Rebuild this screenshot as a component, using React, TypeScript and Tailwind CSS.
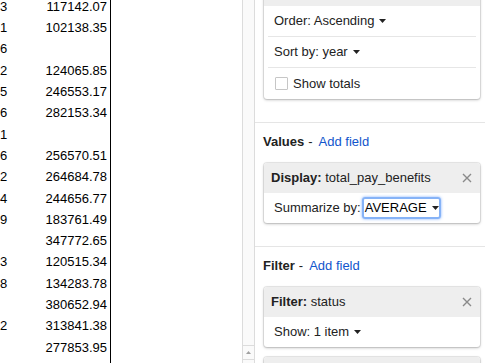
import React from "react";

const rows: [string, string][] = [
  ["3", "117142.07"],
  ["1", "102138.35"],
  ["6", ""],
  ["2", "124065.85"],
  ["5", "246553.17"],
  ["6", "282153.34"],
  ["1", ""],
  ["6", "256570.51"],
  ["2", "264684.78"],
  ["4", "244656.77"],
  ["9", "183761.49"],
  ["", "347772.65"],
  ["3", "120515.34"],
  ["8", "134283.78"],
  ["", "380652.94"],
  ["2", "313841.38"],
  ["", "277853.95"],
  ["9", "161867.50"],
];

function Caret() {
  return (
    <svg width="7" height="4" viewBox="0 0 7 4" className="ml-[5px] shrink-0">
      <path d="M0 0 L7 0 L3.5 4 Z" fill="#222" />
    </svg>
  );
}

function CloseX() {
  return (
    <svg width="10" height="10" viewBox="0 0 10 10">
      <path d="M1 1 L9 9 M9 1 L1 9" stroke="#8a8a8a" strokeWidth="1.4" />
    </svg>
  );
}

function Card({ children }: { children: React.ReactNode }) {
  return (
    <div className="bg-white rounded-[3px] shadow-[0_0_0_1px_rgba(0,0,0,0.08),0_1px_3px_rgba(0,0,0,0.25)] overflow-hidden">
      {children}
    </div>
  );
}

function CardHeader({ label, value }: { label: string; value: string }) {
  return (
    <div className="h-[30px] bg-[#eeeeee] flex items-center justify-between pl-[7px] pr-[8px]">
      <span>
        <b>{label}</b> {value}
      </span>
      <CloseX />
    </div>
  );
}

function SectionLabel({ name }: { name: string }) {
  return (
    <div className="h-[17px] leading-[17px] flex items-center">
      <b>{name}</b>
      <span className="ml-[4px]">-</span>
      <span className="ml-[6px] text-[#1155cc]">Add field</span>
    </div>
  );
}

export default function App() {
  return (
    <div className="w-[485px] h-[363px] overflow-hidden flex bg-white text-[13px] text-[#222] font-['Liberation_Sans',Arial,sans-serif]">
      {/* left data table */}
      <div className="w-[111px] h-full border-r border-black shrink-0 overflow-hidden text-black">
        <div className="mt-[-4px]">
          {rows.map(([a, b], i) => (
            <div key={i} className="h-[21.3px] flex items-center">
              <div className="w-[7px] text-right">{a}</div>
              <div className="w-[100px] text-right">{b}</div>
            </div>
          ))}
        </div>
      </div>

      {/* blank gap */}
      <div className="w-[131px] shrink-0" />

      {/* scrollbar */}
      <div className="w-[13px] shrink-0 h-full border-l border-r border-[#dcdcdc] bg-[#fafafa] flex flex-col overflow-hidden">
        <div className="h-[345px] shrink-0" />
        <div className="h-[14px] shrink-0 border-t border-[#dcdcdc] flex items-center justify-center">
          <svg width="5" height="3" viewBox="0 0 5 3">
            <path d="M0 3 L5 3 L2.5 0 Z" fill="#a0a0a0" />
          </svg>
        </div>
        <div className="h-[14px] shrink-0 border-t border-[#dcdcdc]" />
      </div>

      {/* right panel */}
      <div className="flex-1 h-full overflow-hidden">
        <div className="pl-[9px] pr-[5px] pb-[23px]">
          <div className="mt-[-24px]">
            <Card>
              <div className="h-[30px] bg-[#eeeeee] flex items-center pl-[7px]">
                <span>
                  <b>Rows:</b> year
                </span>
              </div>
              <div className="px-[4px]">
                <div className="h-[31px] border-b border-[#e6e6e6] flex items-center pl-[6px]">
                  Order: Ascending
                  <Caret />
                </div>
                <div className="h-[31px] border-b border-[#e6e6e6] flex items-center pl-[6px]">
                  Sort by: year
                  <Caret />
                </div>
                <div className="h-[31px] flex items-center pl-[7px]">
                  <span className="w-[13px] h-[13px] border border-[#c6c6c6] rounded-[1px] bg-white mr-[5px]" />
                  Show totals
                </div>
              </div>
            </Card>
          </div>
        </div>

        <div className="border-t border-[#e5e5e5] pt-[10px] pb-[23px]">
          <div className="pl-[8px]">
            <SectionLabel name="Values" />
          </div>
          <div className="pl-[9px] pr-[5px] mt-[13px]">
            <Card>
              <CardHeader label="Display:" value="total_pay_benefits" />
              <div className="h-[30px] flex items-center pl-[10px]">
                <span>Summarize by:</span>
                <span className="ml-[1px] w-[79px] h-[22px] border-2 border-[#86b3f7] rounded-[3px] shadow-[0_0_3px_rgba(77,144,254,0.7)] flex items-center pl-[1px] text-black">
                  AVERAGE
                  <Caret />
                </span>
              </div>
            </Card>
          </div>
        </div>

        <div className="border-t border-[#e5e5e5] pt-[10px]">
          <div className="pl-[8px]">
            <SectionLabel name="Filter" />
          </div>
          <div className="pl-[9px] pr-[5px] mt-[13px] flex flex-col gap-[10px]">
            <Card>
              <CardHeader label="Filter:" value="status" />
              <div className="h-[30px] flex items-center pl-[10px]">
                Show: 1 item
                <Caret />
              </div>
            </Card>
            <Card>
              <CardHeader label="Filter:" value="job_title" />
              <div className="h-[30px]" />
            </Card>
          </div>
        </div>
      </div>
    </div>
  );
}
